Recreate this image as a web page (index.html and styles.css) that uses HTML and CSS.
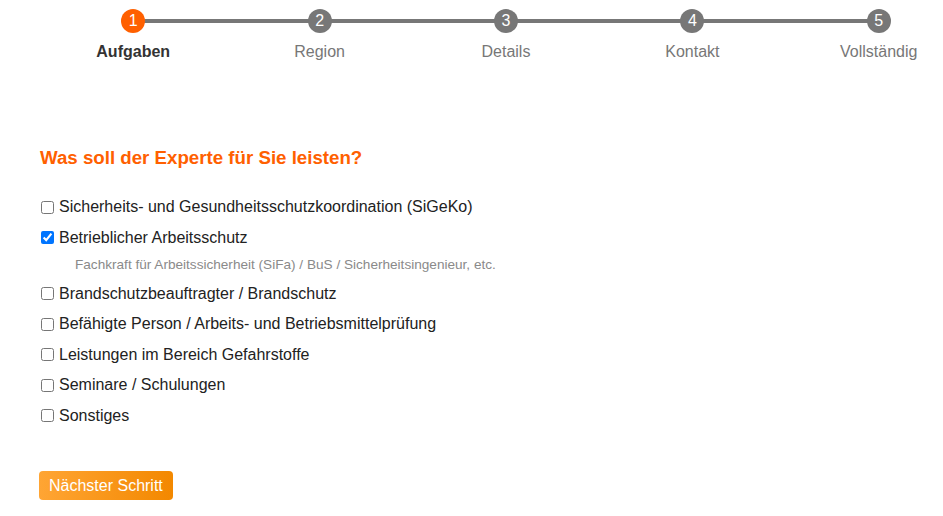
FILE: index.html
```html
<!DOCTYPE html>
<html lang="de">
<head>
<meta charset="utf-8">
<title>Was soll der Experte für Sie leisten?</title>
<link rel="stylesheet" href="styles.css">
</head>
<body>
<div class="page">
  <ol class="stepper">
    <li class="step active"><span class="dot">1</span><span class="label">Aufgaben</span></li>
    <li class="step"><span class="dot">2</span><span class="label">Region</span></li>
    <li class="step"><span class="dot">3</span><span class="label">Details</span></li>
    <li class="step"><span class="dot">4</span><span class="label">Kontakt</span></li>
    <li class="step last"><span class="dot">5</span><span class="label">Vollständig</span></li>
  </ol>

  <h2 class="question">Was soll der Experte für Sie leisten?</h2>

  <form class="options">
    <label class="option"><input type="checkbox"> Sicherheits- und Gesundheitsschutzkoordination (SiGeKo)</label>
    <label class="option"><input type="checkbox" checked> Betrieblicher Arbeitsschutz</label>
    <div class="hint">Fachkraft für Arbeitssicherheit (SiFa) / BuS / Sicherheitsingenieur, etc.</div>
    <label class="option"><input type="checkbox"> Brandschutzbeauftragter / Brandschutz</label>
    <label class="option"><input type="checkbox"> Befähigte Person / Arbeits- und Betriebsmittelprüfung</label>
    <label class="option"><input type="checkbox"> Leistungen im Bereich Gefahrstoffe</label>
    <label class="option"><input type="checkbox"> Seminare / Schulungen</label>
    <label class="option"><input type="checkbox"> Sonstiges</label>
    <div class="actions"><button type="button" class="next">Nächster Schritt</button></div>
  </form>
</div>
</body>
</html>
```

FILE: styles.css
```css
html, body {
  margin: 0;
  padding: 0;
  overflow: hidden;
  background: #fff;
}
body {
  font-family: "Liberation Sans", Arial, sans-serif;
  color: #222;
}
.page {
  padding: 9px 0 0 40px;
}
.stepper {
  list-style: none;
  margin: 0;
  padding: 0;
  display: grid;
  grid-template-columns: repeat(5, 186.4px);
}
.step {
  position: relative;
  display: flex;
  flex-direction: column;
  align-items: center;
}
.step::after {
  content: "";
  position: absolute;
  left: 50%;
  width: 100%;
  top: 10px;
  height: 4px;
  background: #777;
  z-index: 0;
}
.step.last::after {
  display: none;
}
.dot {
  position: relative;
  z-index: 1;
  width: 24px;
  height: 24px;
  border-radius: 50%;
  background: #777;
  color: #fff;
  font-size: 16px;
  line-height: 24px;
  text-align: center;
}
.active .dot {
  background: #ff6000;
}
.label {
  margin-top: 10px;
  font-size: 16px;
  line-height: 18px;
  color: #777;
}
.active .label {
  color: #333;
  font-weight: bold;
}
.question {
  margin: 86px 0 0 0;
  font-size: 18.7px;
  line-height: 21px;
  font-weight: bold;
  color: #ff6000;
}
.options {
  margin-top: 24px;
  display: flex;
  flex-direction: column;
}
.option {
  display: flex;
  align-items: center;
  height: 30.5px;
  font-size: 16px;
  color: #222;
}
.option input {
  margin: 0 5px 0 1px;
  width: 13px;
  height: 13px;
}
.hint {
  height: 25.5px;
  line-height: 25.5px;
  padding-left: 35px;
  font-size: 13.6px;
  color: #8a8a8a;
  margin-top: -1px;
  margin-bottom: 1px;
}
.actions {
  margin-top: 40px;
}
.next {
  margin-left: -1px;
  height: 29px;
  padding: 0 10px;
  border: none;
  border-radius: 4px;
  background: linear-gradient(to right, #ffa534, #f38800);
  color: #fff;
  font-family: "Liberation Sans", Arial, sans-serif;
  font-size: 16px;
  cursor: pointer;
}
```
